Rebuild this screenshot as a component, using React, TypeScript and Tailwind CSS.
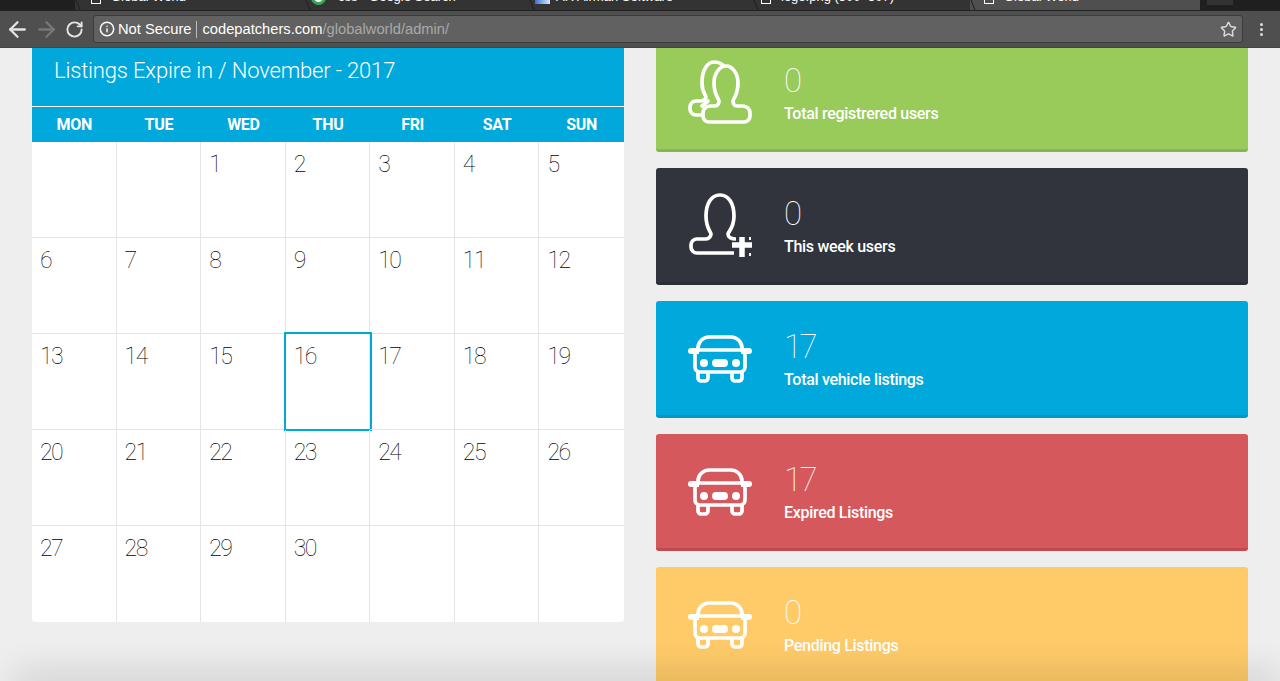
import { ArrowLeft, ArrowRight, Info, RotateCw, Star, X } from 'lucide-react'
import React from 'react'

const weekDays = ['MON', 'TUE', 'WED', 'THU', 'FRI', 'SAT', 'SUN']
const days: (number | null)[] = [
  null, null, 1, 2, 3, 4, 5,
  6, 7, 8, 9, 10, 11, 12,
  13, 14, 15, 16, 17, 18, 19,
  20, 21, 22, 23, 24, 25, 26,
  27, 28, 29, 30, null, null, null,
]

function UsersIcon() {
  return (
    <svg width="64" height="64" viewBox="0 0 64 64" fill="none" stroke="white" strokeWidth="3.7" strokeLinejoin="round" strokeLinecap="round">
      <path d="M13 55H8a6 6 0 0 1-6-6v-2a6 6 0 0 1 6-6h4c3 0 6-2 6-4 0-2-4-4-4-14C14 9 20 2 26 2c4 0 7 1 10 4" />
      <path d="M21 62a6 6 0 0 1-6-6v-3a7 7 0 0 1 7-7h5c3 0 4-3 4-5 0-2-5-6-5-18 0-10 6-17 12-17s12 7 12 17c0 12-5 16-5 18 0 2 1 5 4 5h6a7 7 0 0 1 7 7v3a6 6 0 0 1-6 6z" />
      <path d="M20 41l-6 5" />
    </svg>
  )
}

function UserPlusIcon() {
  return (
    <svg width="64" height="64" viewBox="0 0 64 64" fill="none" stroke="white" strokeWidth="3.7" strokeLinejoin="round">
      <path d="M46 60H9a6 6 0 0 1-6-6v-2a6 6 0 0 1 6-6h9c3 0 5-3 5-5 0-2-5-6-5-18C18 11 23 2 32 2s14 9 14 21c0 12-6 16-6 18 0 3 3 5 8 5" />
      <path d="M44 52h20M54 44v20" strokeWidth="5.5" />
      <rect x="61" y="44" width="2" height="3" fill="white" stroke="none" />
      <rect x="61" y="60" width="2" height="3" fill="white" stroke="none" />
    </svg>
  )
}

function CarIcon() {
  return (
    <svg width="64" height="48" viewBox="0 0 64 48" fill="none" stroke="white" strokeWidth="3.7" strokeLinejoin="round" className="mt-[2px]">
      <path d="M10 16v-3C10 7 15 2 21 2h22c6 0 11 5 11 11v3" />
      <path d="M3 13h8v6H3a3 3 0 0 1 0-6zM61 13h-8v6h8a3 3 0 0 0 0-6z" fill="white" stroke="none" />
      <path d="M12 15h40a5 5 0 0 1 5 5v12a5 5 0 0 1-5 5H12a5 5 0 0 1-5-5V20a5 5 0 0 1 5-5z" />
      <path d="M10 37v6a3 3 0 0 0 3 3h4a3 3 0 0 0 3-3v-6M44 37v6a3 3 0 0 0 3 3h4a3 3 0 0 0 3-3v-6" />
      <circle cx="16" cy="28" r="4" fill="white" stroke="none" />
      <circle cx="48" cy="28" r="4" fill="white" stroke="none" />
      <rect x="24" y="24" width="16" height="8" rx="4" fill="white" stroke="none" />
    </svg>
  )
}

interface StatCardProps {
  icon: React.ReactNode
  value: number
  label: string
  className: string
}

function StatCard({ icon, value, label, className }: StatCardProps) {
  return (
    <div className={`flex h-[117px] shrink-0 items-center rounded-[3px] border-b-[3px] pl-8 text-white ${className}`}>
      <div className="flex w-16 justify-center">{icon}</div>
      <div className="ml-8 pt-[1px]">
        <div className="font-['Roboto'] text-[33px] font-thin leading-[40px] tracking-[-2.5px]">{value}</div>
        <div className="mt-[3px] font-['Roboto'] text-[16px] font-medium leading-5 tracking-[-0.3px]">{label}</div>
      </div>
    </div>
  )
}

function Favicon({ kind }: { kind: 'page' | 'google' | 'grid' }) {
  if (kind === 'google') {
    return <span className="mr-[12px] mt-[3px] h-[15px] w-[15px] shrink-0 rounded-full border-[3px] border-[#34a853] bg-white" />
  }
  if (kind === 'grid') {
    return <span className="mr-[6px] h-[15px] w-[15px] shrink-0 bg-gradient-to-r from-[#3b6fd4] to-[#dfe8f8]" />
  }
  return <span className="mr-[10px] mt-[4px] h-[12px] w-[10px] shrink-0 border border-white" />
}

function BrowserTab({ title, kind, className, inner }: { title: string; kind: 'page' | 'google' | 'grid'; className: string; inner: string }) {
  return (
    <div className={`flex h-[10px] items-end overflow-hidden ${className}`}>
      <svg width="6" height="10" viewBox="0 0 6 10" className="shrink-0">
        <line x1="1" y1="0" x2="5" y2="10" stroke="#1f1f1f" strokeWidth="1" />
      </svg>
      <div className={`flex h-[16px] w-full items-center pb-[12px] pr-[14px] font-['Liberation_Sans'] text-[13px] leading-none text-white ${inner}`}>
        <Favicon kind={kind} />
        <span className="flex-1 whitespace-nowrap">{title}</span>
        <X size={11} className="text-[#999]" />
      </div>
    </div>
  )
}

export default function App() {
  return (
    <div className="flex h-[681px] w-[1280px] flex-col overflow-hidden bg-[#eeeeee]">
      <div className="flex h-[11px] shrink-0 items-start border-b border-[#222] bg-[#1f1f1f] pl-[75px]">
        <BrowserTab title="Global World" kind="page" className="w-[230px] bg-[#333333]" inner="pl-[10px]" />
        <BrowserTab title="css - Google Search" kind="google" className="w-[224px] bg-[#333333]" inner="pl-0" />
        <BrowserTab title="AR Airman Software" kind="grid" className="w-[224px] bg-[#333333]" inner="pl-0" />
        <BrowserTab title="logo.png (300×307)" kind="page" className="w-[217px] bg-[#333333]" inner="pl-[2px]" />
        <BrowserTab title="Global World" kind="page" className="w-[230px] bg-[#4f4f4f]" inner="pl-[8px]" />
        <span className="ml-[7px] h-[5px] w-[26px] bg-[#333333]" />
      </div>
      <div className="flex h-[37px] shrink-0 items-center border-b border-[#444] bg-[#4f4f4f] pl-[5px]">
        <ArrowLeft size={25} strokeWidth={2.2} className="text-[#e4e4e4]" />
        <ArrowRight size={25} strokeWidth={2.2} className="ml-[4px] text-[#777]" />
        <RotateCw size={19} strokeWidth={2.4} className="ml-[6px] text-[#e4e4e4]" />
        <div className="ml-[9px] flex h-[28px] w-[1150px] items-center rounded-[3px] border border-[#3c3c3c] bg-[#616161] pl-[5px] pr-[5px] font-['Liberation_Sans'] text-[14.7px]">
          <Info size={16} strokeWidth={2.2} className="text-white" />
          <span className="ml-[3px] text-white">Not Secure</span>
          <span className="ml-[5px] h-[17px] w-px bg-[#bbb]" />
          <span className="ml-[5px] text-white">codepatchers.com</span>
          <span className="text-[#a9a9a9]">/globalworld/admin/</span>
          <Star size={17} className="ml-auto text-[#ddd]" />
        </div>
        <div className="ml-[17px] flex flex-col gap-[2px]">
          <span className="h-[3px] w-[3px] rounded-full bg-[#ddd]" />
          <span className="h-[3px] w-[3px] rounded-full bg-[#ddd]" />
          <span className="h-[3px] w-[3px] rounded-full bg-[#ddd]" />
        </div>
      </div>

      <div className="relative flex flex-1 items-start gap-8 overflow-hidden px-8">
        <div className="w-[592px] shrink-0 rounded-b-[4px] bg-white">
          <div className="h-[59px] border-b border-white bg-[#00a8db] pl-[22px] pt-[6px] font-['Roboto'] text-[22px] font-light leading-[33px] tracking-[-0.17px] text-white">
            Listings Expire in / November - 2017
          </div>
          <div className="grid h-[35px] grid-cols-7 items-center bg-[#00a8db] text-center font-['Roboto'] text-[16px] font-bold tracking-[-0.3px] text-white">
            {weekDays.map((d) => (
              <div key={d}>{d}</div>
            ))}
          </div>
          <div className="grid grid-cols-7">
            {days.map((d, i) => (
              <div
                key={i}
                className={`relative h-[96px] pl-[8px] pt-[7px] font-['Roboto'] text-[23px] font-thin leading-8 tracking-[-1.5px] text-black ${i % 7 !== 6 ? 'border-r border-[#e4e4e4]' : ''} ${i < 28 ? 'border-b border-[#e4e4e4]' : ''}`}
              >
                {d}
                {d === 16 && <div className="absolute -top-[2px] -right-[3px] -bottom-[2px] -left-[2px] border-2 border-[#00a8db]" />}
              </div>
            ))}
          </div>
        </div>

        <div className="flex w-[592px] shrink-0 flex-col gap-4">
          <StatCard icon={<UsersIcon />} value={0} label="Total registrered users" className="-mt-[13px] border-[#8ab356] bg-[#99cb5b]" />
          <StatCard icon={<UserPlusIcon />} value={0} label="This week users" className="border-[#2b2e36] bg-[#31343c]" />
          <StatCard icon={<CarIcon />} value={17} label="Total vehicle listings" className="border-[#0097c5] bg-[#00a8db]" />
          <StatCard icon={<CarIcon />} value={17} label="Expired Listings" className="border-[#c0494e] bg-[#d5585d]" />
          <StatCard icon={<CarIcon />} value={0} label="Pending Listings" className="border-[#e6b45c] bg-[#ffcb69]" />
        </div>

        <div className="pointer-events-none absolute -bottom-[12px] left-[22px] right-[10px] h-[12px] shadow-[0_0_36px_8px_rgba(0,0,0,0.14)]" />
      </div>
    </div>
  )
}
